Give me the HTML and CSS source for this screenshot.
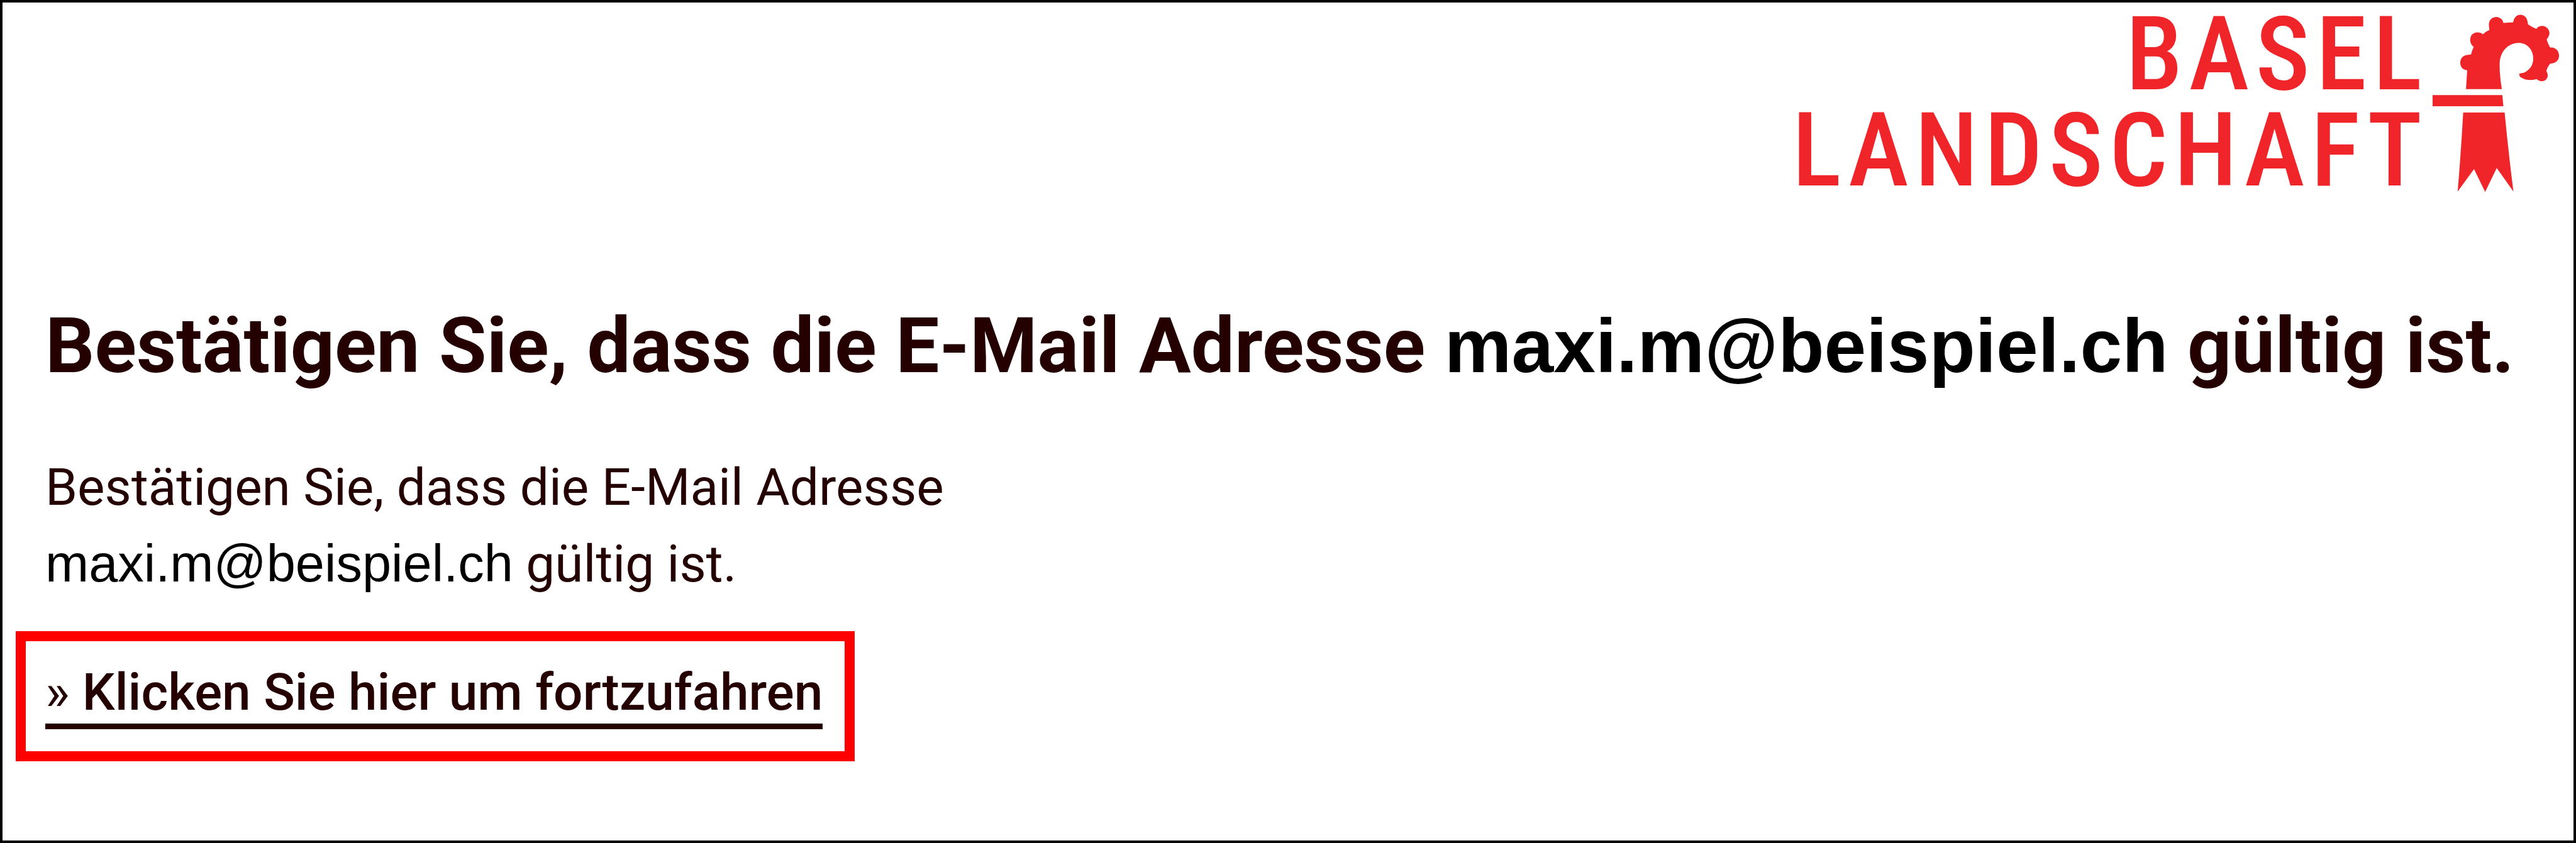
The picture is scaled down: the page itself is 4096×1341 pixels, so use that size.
FILE: index.html
```html
<!DOCTYPE html>
<html lang="de">
<head>
<meta charset="utf-8">
<title>E-Mail Adresse bestätigen</title>
<link rel="stylesheet" href="styles.css">
</head>
<body>
<div class="page">
  <header class="logo">
    <div class="logo-words">
      <span>BASEL</span>
      <span>LANDSCHAFT</span>
    </div>
    <svg class="logo-staff" viewBox="120 90 830 1155" aria-hidden="true">
      <path d="M340 577L348 455C320 452 303 435 303 405C303 375 325 355 355 355L373 352Q378 330 390 303C370 290 365 265 368 248C375 215 400 210 420 210Q440 212 450 222Q465 205 492 193Q488 175 488 155C492 125 512 110 537 110C560 112 578 125 582 149L645 145C650 115 668 96 692 96C720 97 738 115 741 158Q765 175 795 187C805 172 820 167 838 168C865 172 882 195 880 220Q875 240 862 256Q870 285 885 308C920 305 942 330 942 360C942 390 920 412 885 412Q865 435 860 460C872 480 872 500 858 515C840 532 815 528 797 512Q740 528 700 504Q684 495 684 478Q700 472 715 471C750 455 775 425 775 380C775 320 735 278 680 278C610 280 560 335 558 410Q556 480 572 577Z"/>
      <path d="M124 616H575L582 688H124Z"/>
      <path d="M322 729H590Q615 990 647 1240L539 1088L464 1242L392 1095L286 1240Q308 980 322 729Z"/>
    </svg>
  </header>
  <main class="content">
    <h1 class="title">Bestätigen Sie, dass die E-Mail Adresse <span class="mail">maxi.m@beispiel.ch</span> gültig ist.</h1>
    <p class="text">Bestätigen Sie, dass die E-Mail Adresse<br><span class="mail">maxi.m@beispiel.ch</span> gültig ist.</p>
    <div class="highlight">
      <a class="link" href="#"><span class="link-mark">»</span> Klicken Sie hier um fortzufahren</a>
    </div>
  </main>
</div>
</body>
</html>
```
FILE: styles.css
```css
* {
  box-sizing: border-box;
}

body {
  margin: 0;
  background: #fff;
  color: #250000;
  font-family: Roboto, "Liberation Sans", sans-serif;
}

.page {
  min-height: 100vh;
  border: 4px solid #000;
  padding: 6px 21px;
}

.logo {
  display: flex;
  justify-content: flex-end;
  align-items: flex-start;
  gap: 6px;
}

.logo-words {
  display: flex;
  flex-direction: column;
  align-items: flex-end;
  color: #ef252a;
  font-family: "Roboto Condensed", Roboto, sans-serif;
  font-size: 163px;
  font-weight: 500;
  letter-spacing: 10px;
  line-height: 153px;
}

.logo-staff {
  width: 204px;
  height: 284px;
  margin-top: 12px;
  fill: #ef252a;
}

.content {
  padding-top: 162px;
}

.title,
.text {
  margin: 0;
  padding-left: 47px;
}

.title {
  font-size: 123px;
  font-weight: 700;
  line-height: 144px;
}

.text {
  margin-top: 92px;
  font-size: 82px;
  line-height: 122px;
}

.mail {
  color: #000;
  font-family: "Liberation Sans", Arial, sans-serif;
}

.title .mail {
  font-size: 120px;
}

.text .mail {
  font-size: 83px;
}

.highlight {
  width: fit-content;
  margin-top: 46px;
  border: 16px solid #f00;
  padding: 31px 35px 35px 31px;
}

.link {
  display: block;
  border-bottom: 9px solid #250000;
  color: inherit;
  font-size: 82px;
  font-weight: 500;
  line-height: 100px;
  text-decoration: none;
}

.link-mark {
  font-weight: 400;
}
```
